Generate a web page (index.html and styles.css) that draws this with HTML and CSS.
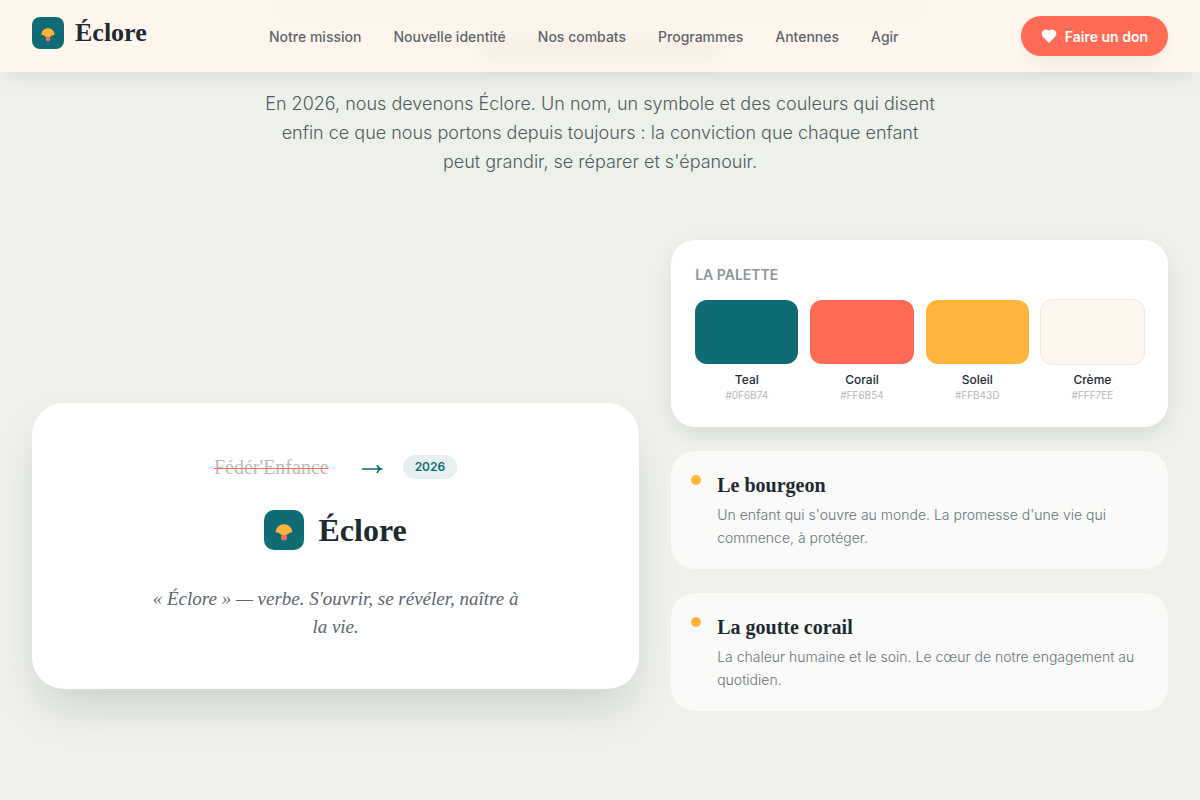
FILE: index.html
```
<!DOCTYPE html>
<html lang="fr">
<head>
  <meta charset="UTF-8">
  <meta name="viewport" content="width=device-width, initial-scale=1.0">
  <title>Éclore</title>
  <link rel="stylesheet" href="styles.css">
</head>
<body>

  <header class="header">
    <div class="container header-inner">
      <a href="#" class="brand">
        <svg class="brand-mark" viewBox="0 0 40 40" aria-hidden="true">
          <rect width="40" height="40" rx="10" fill="#0F6B74"/>
          <path d="M11.700 22.200C12 17.500 15.500 14.200 20 14.200S28 17.500 28.300 22.200C26 22.400 24 23.300 22.500 25H17.500C16 23.300 14 22.400 11.700 22.200Z" fill="#FFB43D"/>
          <circle cx="20" cy="27.400" r="3" fill="#FF6B54"/>
        </svg>
        <span>Éclore</span>
      </a>
      <nav class="nav">
        <a href="#mission">Notre mission</a>
        <a href="#identite">Nouvelle identité</a>
        <a href="#combats">Nos combats</a>
        <a href="#programmes">Programmes</a>
        <a href="#antennes">Antennes</a>
        <a href="#agir">Agir</a>
      </nav>
      <button type="button" class="btn-donate">
        <svg viewBox="0 0 16 16" aria-hidden="true">
          <path d="M8 15L1.900 8.700A4.200 4.200 0 0 1 8 2.800A4.200 4.200 0 0 1 14.100 8.700Z" fill="currentColor"/>
        </svg>
        Faire un don
      </button>
    </div>
  </header>

  <main class="identity" id="identite">
    <div class="container">
      <p class="lead">En 2026, nous devenons Éclore. Un nom, un symbole et des couleurs qui disent enfin ce que nous portons depuis toujours : la conviction que chaque enfant peut grandir, se réparer et s'épanouir.</p>

      <div class="identity-grid">
        <section class="reveal-card">
          <div class="transition">
            <s class="old-name">Fédér'Enfance</s>
            <svg class="arrow" viewBox="0 0 22 12" aria-hidden="true">
              <path d="M1 6H20M16 2Q17 5 20 6Q17 7 16 10" fill="none" stroke="currentColor" stroke-width="1.600"/>
            </svg>
            <span class="year">2026</span>
          </div>
          <div class="new-name">
            <svg class="new-mark" viewBox="0 0 40 40" aria-hidden="true">
              <rect width="40" height="40" rx="10" fill="#0F6B74"/>
              <path d="M11.700 22.200C12 17.500 15.500 14.200 20 14.200S28 17.500 28.300 22.200C26 22.400 24 23.300 22.500 25H17.500C16 23.300 14 22.400 11.700 22.200Z" fill="#FFB43D"/>
              <circle cx="20" cy="27.400" r="3" fill="#FF6B54"/>
            </svg>
            <span>Éclore</span>
          </div>
          <p class="definition">« Éclore » — verbe. S'ouvrir, se révéler, naître à la vie.</p>
        </section>

        <div class="details">
          <section class="palette">
            <h2>LA PALETTE</h2>
            <ul class="swatches">
              <li><div class="swatch teal"></div><strong>Teal</strong><span>#0F6B74</span></li>
              <li><div class="swatch coral"></div><strong>Corail</strong><span>#FF6B54</span></li>
              <li><div class="swatch sun"></div><strong>Soleil</strong><span>#FFB43D</span></li>
              <li><div class="swatch cream"></div><strong>Crème</strong><span>#FFF7EE</span></li>
            </ul>
          </section>
          <article class="symbol">
            <i class="dot"></i>
            <div>
              <h3>Le bourgeon</h3>
              <p>Un enfant qui s'ouvre au monde. La promesse d'une vie qui commence, à protéger.</p>
            </div>
          </article>
          <article class="symbol">
            <i class="dot"></i>
            <div>
              <h3>La goutte corail</h3>
              <p>La chaleur humaine et le soin. Le cœur de notre engagement au quotidien.</p>
            </div>
          </article>
        </div>
      </div>
    </div>
  </main>

</body>
</html>
```
FILE: styles.css
```
* { box-sizing: border-box; }
body {
  margin: 0;
  min-height: 100vh;
  background: #EEF1EA;
  color: #1E2A32;
  font-family: Inter, sans-serif;
}
h2, h3, p, ul { margin: 0; padding: 0; }
a { color: inherit; text-decoration: none; }
.container {
  max-width: 1280px;
  margin: 0 auto;
  padding: 0 32px;
}

/* header */
.header {
  position: sticky;
  top: 0;
  z-index: 10;
  background: #FFF7EE;
  box-shadow: 0 8px 24px -8px rgba(30, 42, 50, 0.12);
}
.header::before,
.header::after {
  content: "";
  position: absolute;
  z-index: -1;
  background: rgba(30, 42, 50, 0.04);
  filter: blur(10px);
}
.header::before {
  top: 0;
  left: 23%;
  right: 23%;
  height: 10px;
}
.header::after {
  top: 38px;
  left: 40%;
  right: 40%;
  height: 22px;
}
.header-inner {
  display: flex;
  align-items: center;
  justify-content: space-between;
  height: 72px;
}
.brand {
  display: flex;
  align-items: center;
  gap: 11px;
  padding-bottom: 6px;
  font-family: "Liberation Serif", serif;
  font-size: 26px;
  font-weight: 700;
}
.brand-mark { width: 32px; height: 32px; }
.nav {
  display: flex;
  gap: 32px;
  font-size: 14px;
  font-weight: 500;
  color: #5B666D;
}
.btn-donate {
  display: flex;
  align-items: center;
  gap: 8px;
  height: 40px;
  padding: 0 20px;
  border: none;
  border-radius: 20px;
  background: #FF6B54;
  color: #fff;
  font-family: inherit;
  font-size: 14px;
  font-weight: 600;
  box-shadow: 0 8px 24px -8px rgba(30, 42, 50, 0.12);
  cursor: pointer;
}
.btn-donate svg { width: 16px; height: 16px; }

/* identity */
.identity { padding: 17px 0 89px; }
.lead {
  max-width: 672px;
  margin: 0 auto 64px;
  font-size: 18px;
  font-weight: 300;
  line-height: 29px;
  text-align: center;
  color: #4F5B62;
}
.identity-grid {
  display: grid;
  grid-template-columns: 11fr 9fr;
  gap: 32px;
  align-items: end;
}
.reveal-card {
  display: flex;
  flex-direction: column;
  align-items: center;
  margin-bottom: 22px;
  padding: 48px;
  border-radius: 32px;
  background: #fff;
  box-shadow: 0 24px 48px -12px rgba(30, 42, 50, 0.18);
}
.transition {
  display: flex;
  align-items: center;
  height: 32px;
}
.old-name {
  font-family: "Liberation Serif", serif;
  font-size: 20px;
  color: #B7BBBE;
  text-decoration: line-through 1px #FF6B54;
}
.arrow {
  width: 22px;
  height: 12px;
  margin: 4px 20px 0 32px;
  color: #0F6B74;
}
.year {
  padding: 0 12px;
  border-radius: 12px;
  background: #E7F0F1;
  color: #0F6B74;
  font-size: 12px;
  font-weight: 600;
  line-height: 24px;
}
.new-name {
  display: flex;
  align-items: center;
  gap: 14px;
  height: 40px;
  margin: 27px 0 35px;
  font-family: "Liberation Serif", serif;
  font-size: 32px;
  font-weight: 700;
}
.new-mark { width: 40px; height: 40px; }
.definition {
  max-width: 384px;
  font-family: "Liberation Serif", serif;
  font-size: 19px;
  font-style: italic;
  line-height: 28px;
  text-align: center;
  color: #5B666D;
}
.details {
  display: flex;
  flex-direction: column;
  gap: 24px;
}
.palette {
  padding: 24px;
  border-radius: 24px;
  background: #fff;
  box-shadow: 0 8px 24px -4px rgba(30, 42, 50, 0.12);
}
.palette h2 {
  margin-bottom: 14px;
  font-size: 14px;
  font-weight: 600;
  line-height: 22px;
  color: #8E9498;
}
.swatches {
  display: grid;
  grid-template-columns: repeat(4, 1fr);
  gap: 12px;
  list-style: none;
  text-align: center;
}
.swatches li { display: flex; flex-direction: column; }
.swatch {
  height: 64px;
  margin-bottom: 8px;
  border-radius: 12px;
}
.teal { background: #0F6B74; }
.coral { background: #FF6B54; }
.sun { background: #FFB43D; }
.cream { background: #FFF7EE; box-shadow: 0 0 0 1px #E8E9EA; }
.swatches strong {
  font-size: 12px;
  font-weight: 500;
  line-height: 16px;
}
.swatches span {
  font-size: 10px;
  line-height: 15px;
  color: #B4B8BA;
}
.symbol {
  display: flex;
  gap: 16px;
  padding: 20px;
  border-radius: 24px;
  background: #FAFAF8;
}
.dot {
  flex: none;
  width: 10px;
  height: 10px;
  margin-top: 4px;
  border-radius: 50%;
  background: #FFB43D;
}
.symbol h3 {
  margin-bottom: 4px;
  font-family: "Liberation Serif", serif;
  font-size: 20px;
  line-height: 28px;
}
.symbol p {
  font-size: 14px;
  font-weight: 300;
  line-height: 23px;
  color: #6A747A;
}
```
